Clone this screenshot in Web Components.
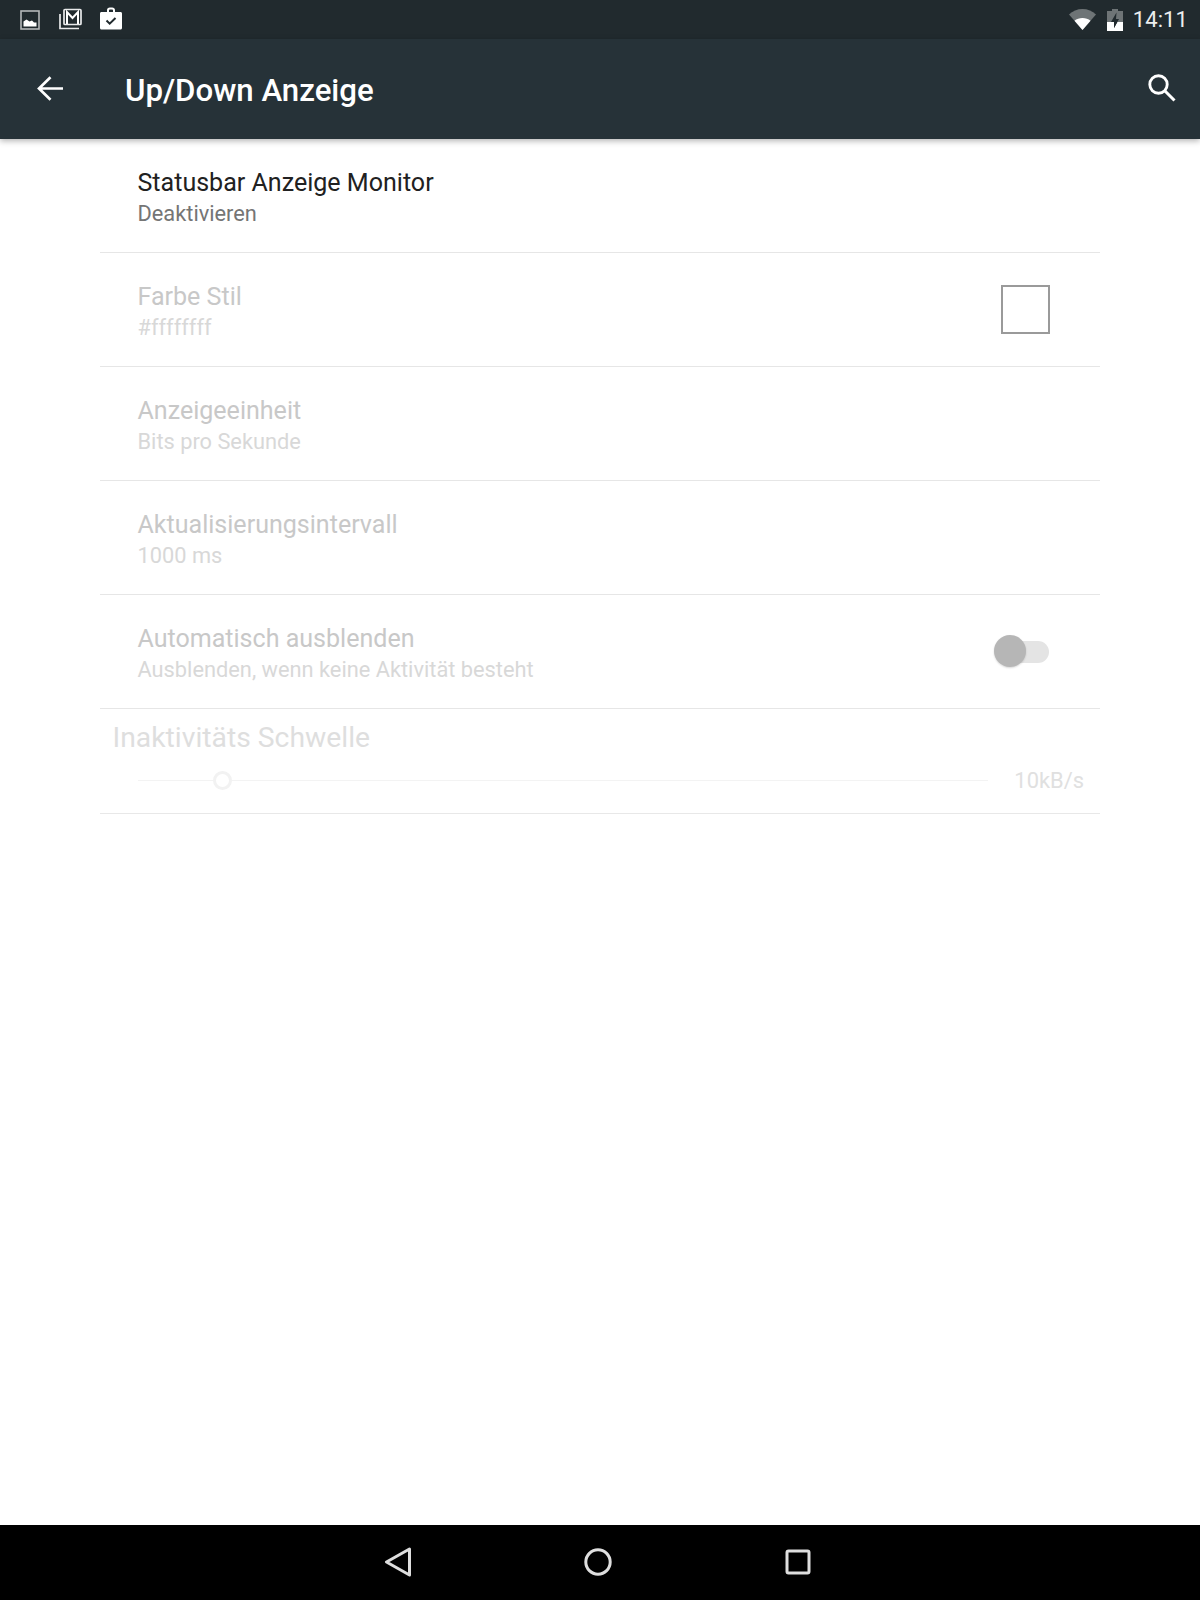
<!DOCTYPE html>
<html>
<head>
<meta charset="utf-8">
<title>Up/Down Anzeige</title>
<style>
html, body { margin: 0; padding: 0; background: #fff; }
body { font-family: Roboto, "Liberation Sans", sans-serif; }
</style>
</head>
<body>
<settings-screen>
	<status-bar slot="top" time="14:11"></status-bar>
	<app-toolbar slot="top" heading="Up/Down Anzeige"></app-toolbar>
	<pref-list>
		<pref-row heading="Statusbar Anzeige Monitor" summary="Deaktivieren"></pref-row>
		<pref-row heading="Farbe Stil" summary="#ffffffff" disabled><color-box></color-box></pref-row>
		<pref-row heading="Anzeigeeinheit" summary="Bits pro Sekunde" disabled></pref-row>
		<pref-row heading="Aktualisierungsintervall" summary="1000 ms" disabled></pref-row>
		<pref-row heading="Automatisch ausblenden" summary="Ausblenden, wenn keine Aktivität besteht" disabled><off-switch></off-switch></pref-row>
		<pref-slider heading="Inaktivitäts Schwelle" value="10kB/s"></pref-slider>
	</pref-list>
	<nav-bar slot="bottom"></nav-bar>
</settings-screen>

<script>
class SettingsScreen extends HTMLElement {
	constructor() {
		super();
		this.attachShadow({ mode: "open" }).innerHTML = `
<style>
	:host { display: flex; flex-direction: column; width: 1200px; height: 1600px; overflow: hidden; }
	main { flex: 1; min-height: 0; }
</style>
<slot name="top"></slot>
<main><slot></slot></main>
<slot name="bottom"></slot>`;
	}
}

class StatusBar extends HTMLElement {
	constructor() {
		super();
		this.attachShadow({ mode: "open" }).innerHTML = `
<style>
	:host { display: flex; align-items: center; height: 39px; background: #212a2e; padding: 0 12px 0 20px; color: #eceeee; }
	svg { display: block; }
	.left { display: flex; align-items: center; gap: 19px; }
	.right { display: flex; align-items: center; margin-left: auto; }
	.time { font-size: 22px; margin-left: 10px; letter-spacing: .1px; line-height: 39px; }
</style>
<div class="left">
	<svg width="20" height="20" viewBox="0 0 20 20">
		<rect x="1" y="1" width="18" height="18" fill="none" stroke="#b4b7b8" stroke-width="1.6"/>
		<path d="M3.5 16.5V11.5L6.5 9.5L9.5 11.5L12 10.5L14 12.5L16.5 12.5V16.5Z" fill="#fff"/>
	</svg>
	<svg width="23" height="22" viewBox="0 0 23 22" style="margin-top:-1px">
		<path d="M1 6V20.5H20" fill="none" stroke="#e8e9ea" stroke-width="1.7"/>
		<rect x="5" y="1.5" width="17" height="15" rx="1" fill="none" stroke="#e8e9ea" stroke-width="1.7"/>
		<path d="M8 16V4L13.500 10L19 4V16" fill="none" stroke="#fff" stroke-width="2"/>
	</svg>
	<svg width="22" height="23" viewBox="0 0 22 23" style="margin:-3px 0 0 -1px">
		<path fill="#fff" fill-rule="evenodd" d="M7 5V3.200C7 1.600 8.200 .5 9.800 .5H12.200C13.800 .5 15 1.600 15 3.200V5H20.500C21.400 5 22 5.600 22 6.500V21C22 21.900 21.400 22.500 20.500 22.500H1.500C.6 22.500 0 21.900 0 21V6.500C0 5.600 .6 5 1.500 5ZM9 5H13V3.300C13 2.800 12.700 2.500 12.200 2.500H9.800C9.300 2.500 9 2.800 9 3.300Z"/>
		<path d="M6.500 13.500L9.700 16.700L15.500 11" fill="none" stroke="#212a2e" stroke-width="2"/>
	</svg>
</div>
<div class="right">
	<svg width="27" height="21" viewBox="0 0 27 21">
		<path d="M13.500 21L0 5.500C3.500 2 8.300 0 13.500 0S23.500 2 27 5.500Z" fill="#6e7476"/>
		<path d="M13.500 21L5.500 11.700C7.600 10 10.400 9 13.500 9S19.400 10 21.500 11.700Z" fill="#fff"/>
	</svg>
	<svg width="16" height="22" viewBox="0 0 16 22" style="margin-left:11px">
		<path d="M5 0H11V2H16V22H0V2H5Z" fill="#6e7476"/>
		<path d="M0 13H16V22H0Z" fill="#fff"/>
		<path d="M9.500 3.500L4 13H7V19L12 10H9Z" fill="#212a2e"/>
		<path d="M7 13H10.300L7 19Z" fill="#212a2e"/>
	</svg>
	<span class="time"></span>
</div>`;
	}
	connectedCallback() {
		this.shadowRoot.querySelector(".time").textContent = this.getAttribute("time");
	}
}

class AppToolbar extends HTMLElement {
	constructor() {
		super();
		this.attachShadow({ mode: "open" }).innerHTML = `
<style>
	:host { display: flex; align-items: center; position: relative; z-index: 1; height: 100px; background: #263238; color: #fff; padding: 0 24px 0 37px; box-shadow: 0 2px 6px rgba(0,0,0,.3); }
	svg { display: block; }
	h1 { margin: 3px 0 0 62px; font-size: 31.200px; font-weight: 500; line-height: 97px; }
	.search { margin-left: auto; }
</style>
<svg width="26" height="25" viewBox="0 0 26 25" style="margin-top:-2px">
	<path d="M26 12.500H2.500M13.500 1.200L2 12.500L13.500 23.800" fill="none" stroke="#fff" stroke-width="2.700"/>
</svg>
<h1></h1>
<svg class="search" width="28" height="28" viewBox="0 0 28 28" style="margin-top:-3px">
	<circle cx="10.500" cy="10.500" r="8.700" fill="none" stroke="#fff" stroke-width="2.900"/>
	<path d="M17 17L26.500 26.500" fill="none" stroke="#fff" stroke-width="3"/>
</svg>`;
	}
	connectedCallback() {
		this.shadowRoot.querySelector("h1").textContent = this.getAttribute("heading");
	}
}

class PrefList extends HTMLElement {
	constructor() {
		super();
		this.attachShadow({ mode: "open" }).innerHTML = `
<style>
	:host { display: block; margin: 0 100px; }
</style>
<slot></slot>`;
	}
}

class PrefRow extends HTMLElement {
	constructor() {
		super();
		this.attachShadow({ mode: "open" }).innerHTML = `
<style>
	:host { display: flex; align-items: center; box-sizing: border-box; height: 114px; padding: 0 50px 0 37.500px; border-bottom: 1px solid #e6e6e6; }
	.text { flex: 1; margin-top: 3px; }
	.title { font-size: 25.050px; line-height: 32px; color: #212121; }
	.sub { font-size: 21.800px; line-height: 28px; margin-top: 1px; color: #757575; }
	:host([disabled]) .title { color: #c8c8c8; }
	:host([disabled]) .sub { color: #d8d8d8; }
</style>
<div class="text"><div class="title"></div><div class="sub"></div></div>
<slot></slot>`;
	}
	connectedCallback() {
		this.shadowRoot.querySelector(".title").textContent = this.getAttribute("heading");
		this.shadowRoot.querySelector(".sub").textContent = this.getAttribute("summary");
	}
}

class ColorBox extends HTMLElement {
	constructor() {
		super();
		this.attachShadow({ mode: "open" }).innerHTML = `
<style>
	:host { display: block; box-sizing: border-box; width: 49px; height: 49px; margin-top: 0; border: 2px solid #9a9a9a; background: #fff; }
</style>`;
	}
}

class OffSwitch extends HTMLElement {
	constructor() {
		super();
		this.attachShadow({ mode: "open" }).innerHTML = `
<style>
	:host { display: block; position: relative; width: 56px; height: 34px; margin-right: -1px; }
	.track { position: absolute; left: 10px; right: 2px; top: 6px; height: 22px; border-radius: 11px; background: #e4e4e4; }
	.thumb { position: absolute; left: -1px; top: 0; width: 32px; height: 32px; border-radius: 50%; background: #b6b6b6; box-shadow: 0 1px 2px rgba(0,0,0,.16); }
</style>
<div class="track"></div><div class="thumb"></div>`;
	}
}

class PrefSlider extends HTMLElement {
	constructor() {
		super();
		this.attachShadow({ mode: "open" }).innerHTML = `
<style>
	:host { display: block; box-sizing: border-box; height: 105px; padding: 11px 16px 0 12.500px; border-bottom: 1px solid #e8e8e8; }
	.label { font-size: 28.300px; line-height: 36px; color: #dedede; }
	.line { display: flex; align-items: center; margin-top: 8px; padding-left: 25px; }
	.track { position: relative; flex: 1; height: 1px; background: #f3f3f3; }
	.thumb { position: absolute; left: 75px; top: -9px; box-sizing: border-box; width: 19px; height: 19px; border-radius: 50%; border: 3px solid #f2f2f2; background: #fff; }
	.value { margin: 1px 0 -1px 26px; font-size: 21.900px; line-height: 32px; color: #e0e0e0; }
</style>
<div class="label"></div>
<div class="line"><div class="track"><div class="thumb"></div></div><div class="value"></div></div>`;
	}
	connectedCallback() {
		this.shadowRoot.querySelector(".label").textContent = this.getAttribute("heading");
		this.shadowRoot.querySelector(".value").textContent = this.getAttribute("value");
	}
}

class NavBar extends HTMLElement {
	constructor() {
		super();
		this.attachShadow({ mode: "open" }).innerHTML = `
<style>
	:host { display: flex; justify-content: center; align-items: center; height: 75px; background: #000; padding: 0 5px 1px 0; box-sizing: border-box; }
	div { width: 200px; display: flex; justify-content: center; }
	svg { display: block; }
</style>
<div><svg width="28" height="30" viewBox="0 0 28 30">
	<path d="M25.500 2L2.500 15L25.500 28Z" fill="none" stroke="#dedede" stroke-width="3" stroke-linejoin="round"/>
</svg></div>
<div><svg width="28" height="28" viewBox="0 0 28 28">
	<circle cx="14" cy="14" r="12.200" fill="none" stroke="#dedede" stroke-width="3"/>
</svg></div>
<div><svg width="26" height="26" viewBox="0 0 26 26">
	<rect x="2" y="2" width="22" height="22" rx="1.500" fill="none" stroke="#dedede" stroke-width="3"/>
</svg></div>`;
	}
}

customElements.define("settings-screen", SettingsScreen);
customElements.define("status-bar", StatusBar);
customElements.define("app-toolbar", AppToolbar);
customElements.define("pref-list", PrefList);
customElements.define("pref-row", PrefRow);
customElements.define("color-box", ColorBox);
customElements.define("off-switch", OffSwitch);
customElements.define("pref-slider", PrefSlider);
customElements.define("nav-bar", NavBar);
</script>
</body>
</html>
